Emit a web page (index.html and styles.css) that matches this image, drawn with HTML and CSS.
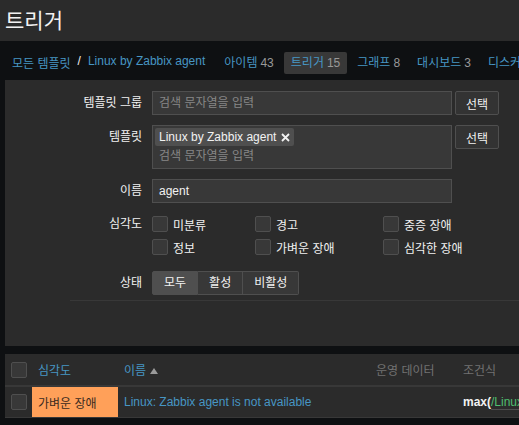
FILE: index.html
```html
<!DOCTYPE html>
<html lang="ko">
<head>
    <meta charset="UTF-8">
    <title>트리거</title>
    <link rel="stylesheet" href="styles.css">
</head>
<body>
    <header class="page-header">
        <h1>트리거</h1>
    </header>

    <div class="wrap">
        <nav class="nav-row">
            <ul class="breadcrumbs">
                <li><a href="#">모든 템플릿</a></li>
                <li class="sep">/</li>
                <li><a href="#">Linux by Zabbix agent</a></li>
            </ul>
            <ul class="tabs">
                <li><a href="#">아이템</a><span class="count">43</span></li>
                <li class="selected"><a href="#">트리거</a><span class="count">15</span></li>
                <li><a href="#">그래프</a><span class="count">8</span></li>
                <li><a href="#">대시보드</a><span class="count">3</span></li>
                <li><a href="#">디스커버리 규칙</a><span class="count">3</span></li>
            </ul>
        </nav>

        <section class="filter">
            <div class="form-row">
                <label>템플릿 그룹</label>
                <div class="field">
                    <div class="input placeholder">검색 문자열을 입력</div>
                    <button class="btn">선택</button>
                </div>
            </div>
            <div class="form-row">
                <label>템플릿</label>
                <div class="field">
                    <div class="multiselect">
                        <span class="tag">Linux by Zabbix agent
                            <svg class="tag-x" width="9" height="9" viewBox="0 0 9 9"><path d="M1 1L8 8M8 1L1 8" stroke="#f2f2f2" stroke-width="1.8"/></svg>
                        </span>
                        <div class="ms-input placeholder">검색 문자열을 입력</div>
                    </div>
                    <button class="btn">선택</button>
                </div>
            </div>
            <div class="form-row row-name">
                <label>이름</label>
                <div class="field">
                    <div class="input">agent</div>
                </div>
            </div>
            <div class="form-row row-severity">
                <label class="short">심각도</label>
                <div class="check-grid">
                    <div class="check"><span class="checkbox"></span>미분류</div>
                    <div class="check"><span class="checkbox"></span>경고</div>
                    <div class="check"><span class="checkbox"></span>중증 장애</div>
                    <div class="check"><span class="checkbox"></span>정보</div>
                    <div class="check"><span class="checkbox"></span>가벼운 장애</div>
                    <div class="check"><span class="checkbox"></span>심각한 장애</div>
                </div>
            </div>
            <div class="form-row row-status">
                <label>상태</label>
                <div class="segmented">
                    <span class="seg selected">모두</span>
                    <span class="seg">활성</span>
                    <span class="seg">비활성</span>
                </div>
            </div>
            <div class="filter-sep"></div>
        </section>

        <table class="list">
            <colgroup>
                <col class="c-check">
                <col class="c-sev">
                <col class="c-name">
                <col class="c-op">
                <col class="c-expr">
            </colgroup>
            <thead>
                <tr>
                    <th><span class="checkbox"></span></th>
                    <th><a href="#">심각도</a></th>
                    <th><a href="#">이름</a><span class="arrow-up"></span></th>
                    <th class="muted">운영 데이터</th>
                    <th class="muted">조건식</th>
                </tr>
            </thead>
            <tbody>
                <tr>
                    <td><span class="checkbox"></span></td>
                    <td class="sev-average">가벼운 장애</td>
                    <td><a href="#">Linux: Zabbix agent is not available</a></td>
                    <td></td>
                    <td class="expr"><b>max(</b><span class="item-key">/Linux by Zabbix agent/agent.ping,3m</span><b>)=0</b></td>
                </tr>
            </tbody>
        </table>
    </div>
</body>
</html>
```

FILE: styles.css
```css
body {
    margin: 0;
    background-color: #0e1012;
    color: #f2f2f2;
    font-family: "Liberation Sans", Arial, "Noto Sans CJK KR", sans-serif;
    font-size: 12px;
    overflow: hidden;
}

a {
    color: #4796c4;
    text-decoration: none;
}

ul {
    list-style: none;
    margin: 0;
    padding: 0;
}

.page-header {
    background-color: #2b2b2b;
    height: 41px;
    padding: 0 5px;
    display: flex;
    align-items: center;
}

h1 {
    margin: 0 0 3px;
    font-size: 21px;
    font-weight: normal;
}

.wrap {
    width: 860px;
}

/* breadcrumbs + tabs */
.nav-row {
    display: flex;
    align-items: center;
    height: 39px;
    padding: 4px 0 0 12px;
    box-sizing: border-box;
}

.breadcrumbs {
    display: flex;
    gap: 7px;
}

.tabs {
    display: flex;
    gap: 3px;
    margin-left: 12px;
}

.tabs li {
    height: 22px;
    line-height: 22px;
    padding: 0 7px;
    border-radius: 2px;
    white-space: nowrap;
}

.tabs li.selected {
    background-color: #383838;
}

.tabs .count {
    color: #999;
    margin-left: 3px;
}

/* filter */
.filter {
    background-color: #2b2b2b;
    margin-left: 5px;
    padding: 11px 0 45px;
}

.form-row {
    display: grid;
    grid-template-columns: 137px 1fr;
    column-gap: 10px;
    margin-bottom: 10px;
}

.form-row label {
    text-align: right;
    line-height: 24px;
}

.form-row label.short {
    line-height: 20px;
}

.row-name {
    margin-bottom: 11px;
}

.row-severity {
    margin-bottom: 14px;
}

.row-status {
    margin-bottom: 0;
}

.field {
    display: flex;
    align-items: flex-start;
    gap: 3px;
}

.input {
    width: 300px;
    height: 24px;
    box-sizing: border-box;
    background-color: #383838;
    border: 1px solid #4f4f4f;
    padding: 0 6px;
    line-height: 22px;
}

.placeholder {
    color: #878787;
}

.btn {
    height: 24px;
    padding: 0 10px;
    background-color: #333;
    border: 1px solid #4f4f4f;
    border-radius: 2px;
    color: #f2f2f2;
    font: inherit;
}

.multiselect {
    width: 300px;
    height: 44px;
    box-sizing: border-box;
    background-color: #383838;
    border: 1px solid #4f4f4f;
    padding: 2px;
}

.tag {
    display: inline-flex;
    align-items: center;
    gap: 5px;
    height: 18px;
    padding: 0 4px;
    background-color: #4f4f4f;
    border-radius: 2px;
}

.ms-input {
    padding: 0 4px;
    line-height: 20px;
}

.check-grid {
    display: grid;
    grid-template-columns: 103px 128px auto;
    row-gap: 3px;
}

.check {
    display: flex;
    align-items: center;
    gap: 5px;
    height: 20px;
}

.checkbox {
    display: inline-block;
    width: 16px;
    height: 16px;
    box-sizing: border-box;
    background-color: #383838;
    border: 1px solid #4f4f4f;
    border-radius: 2px;
    vertical-align: middle;
}

.segmented {
    display: flex;
}

.seg {
    height: 24px;
    line-height: 22px;
    box-sizing: border-box;
    padding: 0 11px;
    background-color: #383838;
    border: 1px solid #4f4f4f;
    border-left: none;
}

.seg:first-child {
    border-left: 1px solid #4f4f4f;
    border-radius: 2px 0 0 2px;
}

.seg:last-child {
    border-radius: 0 2px 2px 0;
}

.seg.selected {
    background-color: #4f4f4f;
}

.filter-sep {
    margin: 5px 0 0 65px;
    border-top: 1px solid #383838;
}

/* list */
.list {
    margin: 8px 0 0 5px;
    width: 855px;
    table-layout: fixed;
    border-collapse: collapse;
    background-color: #2b2b2b;
}

.c-check { width: 27px; }
.c-sev { width: 86px; }
.c-name { width: 252px; }
.c-op { width: 87px; }

.list th {
    height: 31px;
    padding: 0 6px;
    text-align: left;
    font-weight: normal;
    border-bottom: 2px solid #383838;
    white-space: nowrap;
}

.list th.muted {
    color: #727272;
}

.list td {
    height: 30px;
    padding: 0 6px;
    border-bottom: 1px solid #383838;
    white-space: nowrap;
    overflow: hidden;
}

.arrow-up {
    display: inline-block;
    margin-left: 4px;
    border-left: 4px solid transparent;
    border-right: 4px solid transparent;
    border-bottom: 6px solid #9a9a9a;
    vertical-align: 1px;
}

.sev-average {
    background-color: #ffa059;
    color: #3a2a1e;
}

.expr b {
    font-weight: bold;
}

.item-key {
    color: #4fbf6f;
    border-bottom: 1px solid #4f4f4f;
}
```
